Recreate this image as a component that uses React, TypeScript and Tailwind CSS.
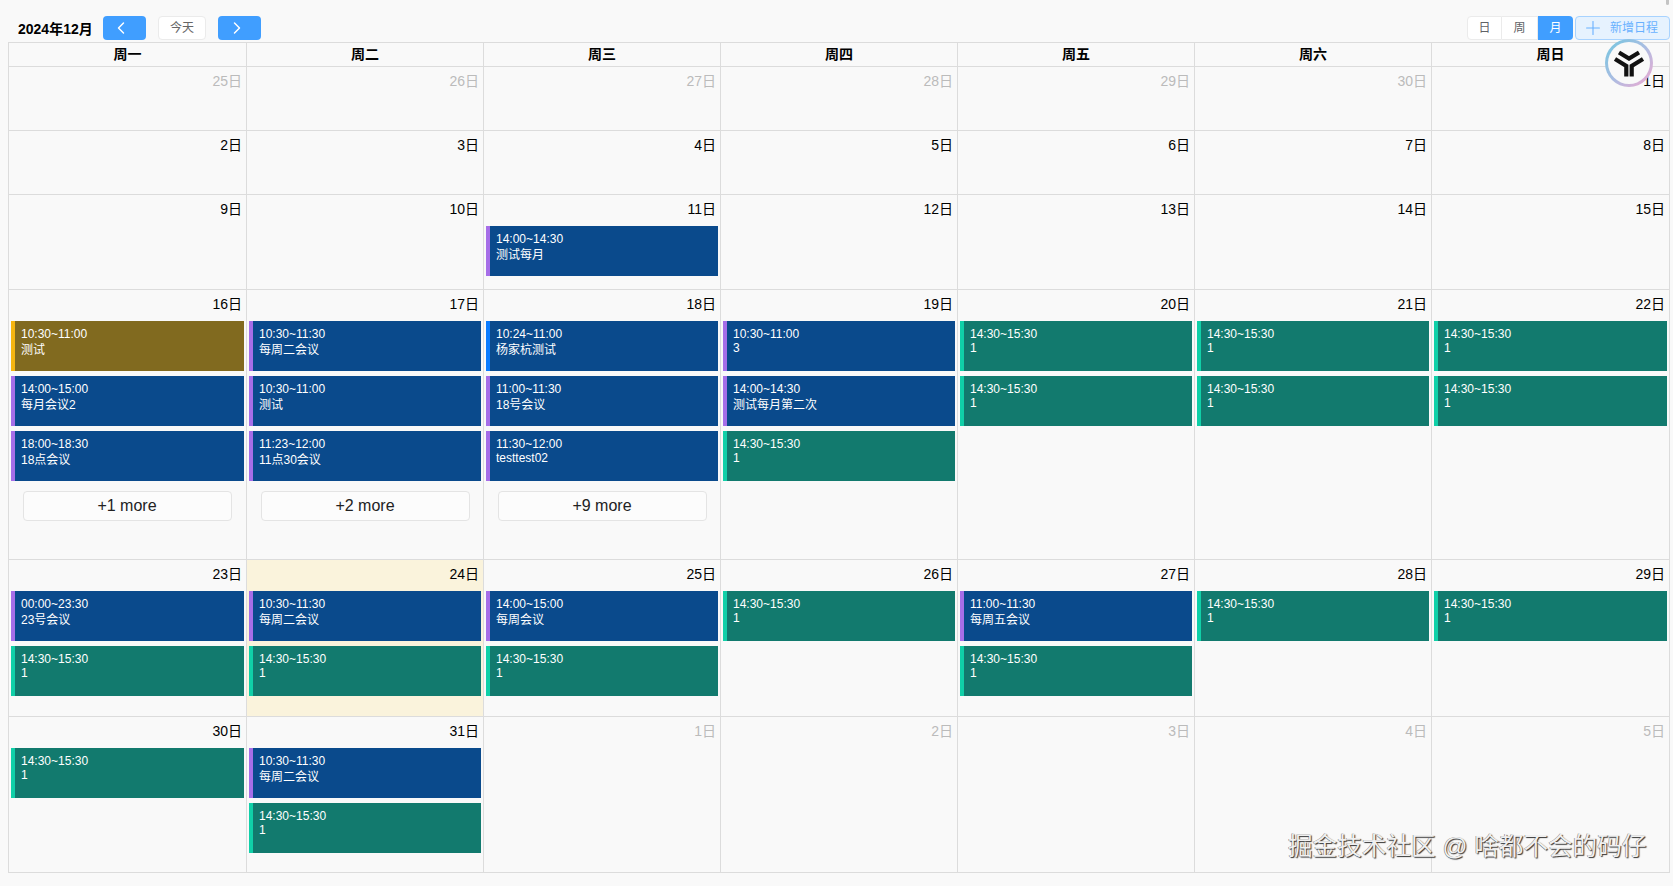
import React from 'react';
import { ChevronLeft, ChevronRight, Plus } from 'lucide-react';

type Kind = 'meeting' | 'personal' | 'warn' | 'teal';

interface CalEvent {
  time: string;
  title: string;
  kind: Kind;
}

interface Day {
  label: string;
  muted?: boolean;
  today?: boolean;
  events?: CalEvent[];
  more?: number;
}

const kindClass: Record<Kind, string> = {
  meeting: 'bg-[#0a4a8c] border-[#a66ee8]',
  personal: 'bg-[#0a4a8c] border-[#0a7cff]',
  warn: 'bg-[#816a1f] border-[#f5b50f]',
  teal: 'bg-[#127a6e] border-[#10d0a8]',
};

const ev = (time: string, title: string, kind: Kind = 'meeting'): CalEvent => ({ time, title, kind });
const teal = ev('14:30~15:30', '1', 'teal');

const weekDays = ['周一', '周二', '周三', '周四', '周五', '周六', '周日'];

const weeks: { height: string; days: Day[] }[] = [
  {
    height: 'h-[64px]',
    days: [
      { label: '25日', muted: true },
      { label: '26日', muted: true },
      { label: '27日', muted: true },
      { label: '28日', muted: true },
      { label: '29日', muted: true },
      { label: '30日', muted: true },
      { label: '1日' },
    ],
  },
  {
    height: 'h-[64px]',
    days: [
      { label: '2日' },
      { label: '3日' },
      { label: '4日' },
      { label: '5日' },
      { label: '6日' },
      { label: '7日' },
      { label: '8日' },
    ],
  },
  {
    height: 'h-[95px]',
    days: [
      { label: '9日' },
      { label: '10日' },
      { label: '11日', events: [ev('14:00~14:30', '测试每月')] },
      { label: '12日' },
      { label: '13日' },
      { label: '14日' },
      { label: '15日' },
    ],
  },
  {
    height: 'h-[270px]',
    days: [
      {
        label: '16日',
        more: 1,
        events: [ev('10:30~11:00', '测试', 'warn'), ev('14:00~15:00', '每月会议2'), ev('18:00~18:30', '18点会议')],
      },
      {
        label: '17日',
        more: 2,
        events: [ev('10:30~11:30', '每周二会议'), ev('10:30~11:00', '测试'), ev('11:23~12:00', '11点30会议')],
      },
      {
        label: '18日',
        more: 9,
        events: [ev('10:24~11:00', '杨家杭测试', 'personal'), ev('11:00~11:30', '18号会议'), ev('11:30~12:00', 'testtest02')],
      },
      {
        label: '19日',
        events: [ev('10:30~11:00', '3'), ev('14:00~14:30', '测试每月第二次'), teal],
      },
      { label: '20日', events: [teal, teal] },
      { label: '21日', events: [teal, teal] },
      { label: '22日', events: [teal, teal] },
    ],
  },
  {
    height: 'h-[157px]',
    days: [
      { label: '23日', events: [ev('00:00~23:30', '23号会议'), teal] },
      { label: '24日', today: true, events: [ev('10:30~11:30', '每周二会议'), teal] },
      { label: '25日', events: [ev('14:00~15:00', '每周会议'), teal] },
      { label: '26日', events: [teal] },
      { label: '27日', events: [ev('11:00~11:30', '每周五会议'), teal] },
      { label: '28日', events: [teal] },
      { label: '29日', events: [teal] },
    ],
  },
  {
    height: 'h-[156px]',
    days: [
      { label: '30日', events: [teal] },
      { label: '31日', events: [ev('10:30~11:30', '每周二会议'), teal] },
      { label: '1日', muted: true },
      { label: '2日', muted: true },
      { label: '3日', muted: true },
      { label: '4日', muted: true },
      { label: '5日', muted: true },
    ],
  },
];

// titles with Chinese sit on a taller line box, pull them up a touch
const hasCjk = (text: string) => /[^\x00-\x7f]/.test(text);

const EventCard = ({ event }: { event: CalEvent }) => (
  <div className={`mx-0.5 h-[50px] overflow-hidden border-l-4 pl-1.5 pt-[6px] text-xs text-white ${kindClass[event.kind]}`}>
    <div className="leading-[14px]">{event.time}</div>
    <div className={`leading-[normal] ${hasCjk(event.title) ? '-mt-px' : ''}`}>{event.title}</div>
  </div>
);

const DayCell = ({ day }: { day: Day }) => (
  <div className={`border-r border-[#dcdcdc] ${day.today ? 'bg-[#faf3dc]' : ''}`}>
    <div className={`h-[31px] pr-1 pt-1 text-right text-sm leading-5 ${day.muted ? 'text-[#bbbbbb]' : 'text-black'}`}>
      {day.label}
    </div>
    {day.events && (
      <div className="flex flex-col gap-[5px]">
        {day.events.map((event, index) => (
          <EventCard key={index} event={event} />
        ))}
      </div>
    )}
    {day.more && (
      <button className="ml-[13.5px] mt-2.5 block h-[30px] w-[209px] rounded border border-[#e4e4e4] bg-[#fcfcfc] text-base leading-[26px] text-[#222222]">
        +{day.more} more
      </button>
    )}
  </div>
);

const App: React.FC = () => {
  return (
    <div className="relative h-[886px] w-[1673px] overflow-hidden bg-[#f9f9f9] font-['Liberation_Sans','Noto_Sans_CJK_SC',sans-serif]">
      <div className="flex h-[42px] items-start pl-[18px] pr-[3px] pt-4">
        <div className="w-[85px] shrink-0 pt-1 text-sm font-bold leading-[18px] text-black">2024年12月</div>
        <button className="flex h-6 w-[43px] items-center justify-center rounded bg-[#409eff] pr-2 text-white">
          <ChevronLeft size={20} strokeWidth={1.75} />
        </button>
        <button className="ml-3 h-6 w-12 rounded border border-[#ebebeb] bg-white text-xs text-[#666666]">今天</button>
        <button className="ml-3 flex h-6 w-[43px] items-center justify-center rounded bg-[#409eff] pr-1.5 text-white">
          <ChevronRight size={20} strokeWidth={1.75} />
        </button>
        <div className="ml-auto flex h-6 text-xs text-[#606266]">
          <button className="w-[35px] rounded-l border border-[#ebebeb] bg-white">日</button>
          <button className="w-[36px] border-y border-r border-[#ebebeb] bg-white">周</button>
          <button className="w-[35px] rounded-r bg-[#409eff] text-white">月</button>
        </div>
        <button className="ml-[2px] flex h-6 w-[95px] items-center rounded border border-[#a8d3ff] bg-[#e6f2fe] pl-[6px] text-xs text-[#69b1ff]">
          <Plus size={22} strokeWidth={1.2} />
          <span className="ml-[6px]">新增日程</span>
        </button>
      </div>

      <div className="ml-2 w-[1662px] border-l border-t border-[#dcdcdc]">
        <div className="grid h-6 grid-cols-[238px_repeat(5,237px)_238px] border-b border-[#dcdcdc]">
          {weekDays.map((name) => (
            <div key={name} className="border-r border-[#dcdcdc] text-center text-sm font-bold leading-[22px] text-black">
              {name}
            </div>
          ))}
        </div>
        {weeks.map((week, index) => (
          <div key={index} className={`grid grid-cols-[238px_repeat(5,237px)_238px] border-b border-[#dcdcdc] ${week.height}`}>
            {week.days.map((day) => (
              <DayCell key={day.label} day={day} />
            ))}
          </div>
        ))}
      </div>

      {/* floating assistant button */}
      <div className="absolute left-[1605px] top-[39px] h-12 w-12 rounded-full bg-linear-to-br from-[#6cc6e0] via-[#a9bde2] to-[#f0a6d0] p-[3px]">
        <div className="flex h-full w-full items-center justify-center rounded-full bg-[#f9f9f9]">
          <svg width="42" height="42" viewBox="0 0 42 42" fill="none" stroke="#111111" strokeWidth="4.2">
            <path d="M11 10.5 L21 16.5 L31 10.5" />
            <path d="M7 17 L18.3 24 V34.5" />
            <path d="M35 17 L23.7 24 V34.5" />
          </svg>
        </div>
      </div>

      <div className="absolute right-[4px] top-0 h-[5px] w-[3px] rounded-b-sm bg-[#c4c4c4]" />

      {/* site watermark */}
      <div className="absolute left-[1288px] top-[832px] whitespace-nowrap text-[24.6px] leading-[30px] text-[#f0f0f0] [text-shadow:1px_1px_1px_#333333,-0.5px_-0.5px_0.5px_#777777]">
        掘金技术社区 @ 啥都不会的码仔
      </div>
    </div>
  );
};

export default App;
